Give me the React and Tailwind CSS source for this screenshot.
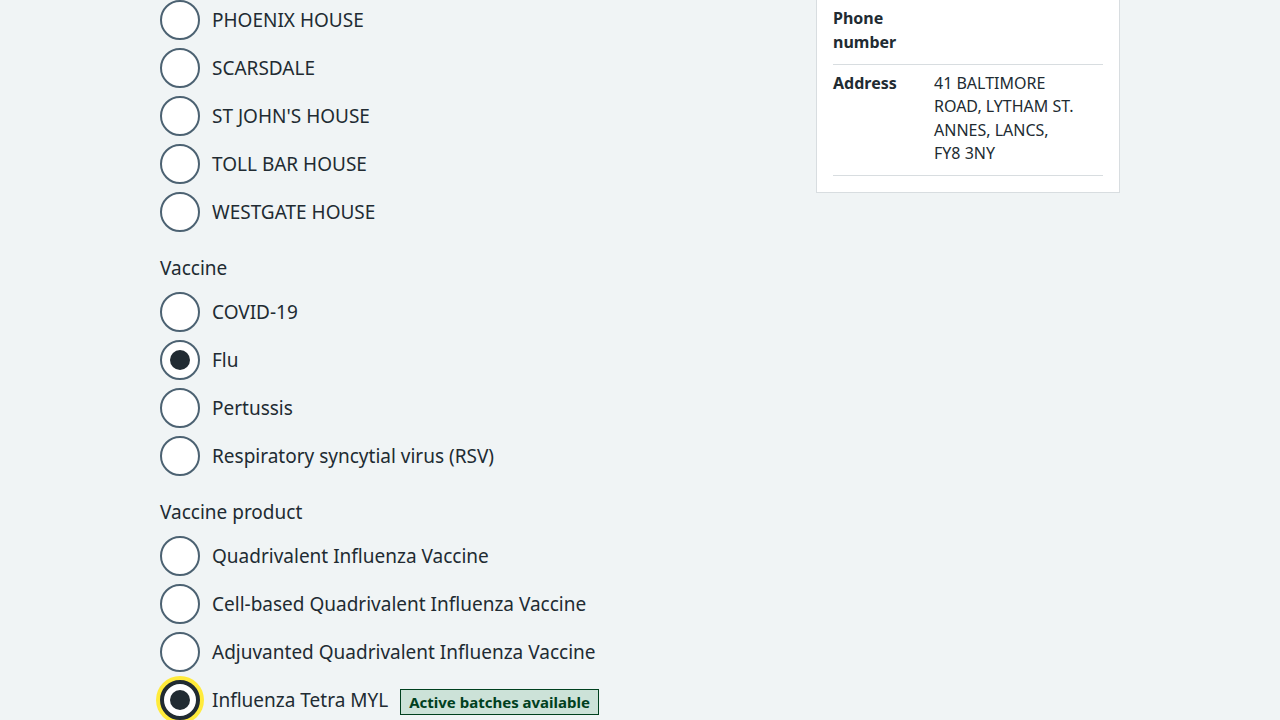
import React from "react";

function Radio({ label, checked, focused, children }) {
  let circle =
    "w-10 h-10 rounded-full bg-white flex items-center justify-center shrink-0 box-border ";
  if (focused) circle += "border-4 border-[#212b32] shadow-[0_0_0_4px_#ffeb3b]";
  else circle += "border-2 border-[#4c6272]";
  return (
    <div className="flex items-center h-10">
      <div className={circle}>
        {checked && <div className="w-5 h-5 rounded-full bg-[#212b32]" />}
      </div>
      <span className="ml-3 text-[19px] leading-7 text-[#212b32]">{label}</span>
      {children}
    </div>
  );
}

function Group({ legend, items, checkedIndex, focusedIndex, extra }) {
  return (
    <div className="mt-6">
      {legend && (
        <div className="text-[19px] leading-6 text-[#212b32] mb-3">{legend}</div>
      )}
      <div className="flex flex-col gap-2">
        {items.map((it, i) => (
          <Radio
            key={it}
            label={it}
            checked={i === checkedIndex}
            focused={i === focusedIndex}
          >
            {i === focusedIndex && extra}
          </Radio>
        ))}
      </div>
    </div>
  );
}

export default function App() {
  return (
    <div
      className="min-h-screen bg-[#f0f4f5] overflow-hidden"
      style={{ fontFamily: '"Noto Sans", Arial, sans-serif' }}
    >
      <div className="w-[960px] mx-auto flex items-start">
        <div className="w-[656px] flex flex-col">
          <div className="flex flex-col gap-2">
            {["PHOENIX HOUSE", "SCARSDALE", "ST JOHN'S HOUSE", "TOLL BAR HOUSE", "WESTGATE HOUSE"].map(
              (t) => (
                <Radio key={t} label={t} />
              )
            )}
          </div>
          <Group
            legend="Vaccine"
            items={["COVID-19", "Flu", "Pertussis", "Respiratory syncytial virus (RSV)"]}
            checkedIndex={1}
          />
          <Group
            legend="Vaccine product"
            items={[
              "Quadrivalent Influenza Vaccine",
              "Cell-based Quadrivalent Influenza Vaccine",
              "Adjuvanted Quadrivalent Influenza Vaccine",
              "Influenza Tetra MYL",
            ]}
            checkedIndex={3}
            focusedIndex={3}
            extra={
              <span className="ml-3 mt-1 px-2 h-[26px] flex items-center border border-[#00401e] bg-[#cce2d8] text-[#00401e] text-[15px] font-bold leading-none">
                Active batches available
              </span>
            }
          />
        </div>
        <div className="w-[304px] -mt-[17px] bg-white border border-[#d8dde0] px-4 pt-4 pb-4 text-[#212b32] text-base">
          <div className="flex border-b border-[#d8dde0] pt-[6px] pb-[10px] leading-6">
            <div className="w-[101px] font-bold">
              Phone
              <br />
              number
            </div>
            <div className="flex-1" />
          </div>
          <div className="flex border-b border-[#d8dde0] pt-[7px] pb-[9px] leading-[23.4px]">
            <div className="w-[101px] font-bold">Address</div>
            <div className="flex-1">
              41 BALTIMORE
              <br />
              ROAD, LYTHAM ST.
              <br />
              ANNES, LANCS,
              <br />
              FY8 3NY
            </div>
          </div>
        </div>
      </div>
    </div>
  );
}
